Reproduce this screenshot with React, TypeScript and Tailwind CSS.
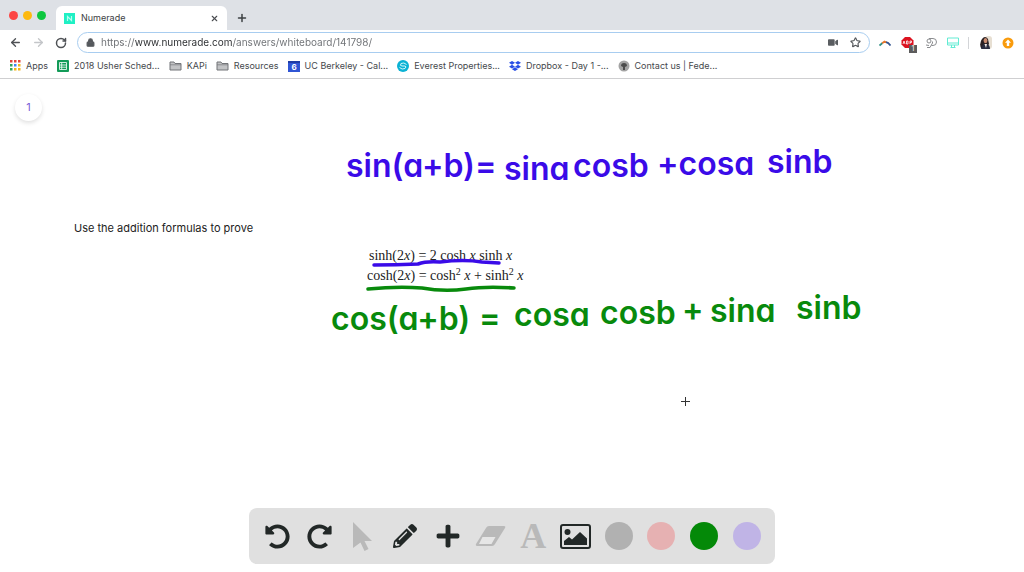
import type { ReactNode } from 'react';
import { ArrowLeft, ArrowRight, Lock, Plus, RotateCw, Star, X } from 'lucide-react';
import { FaDropbox, FaPencilAlt, FaPlus, FaUndoAlt, FaRedoAlt, FaVideo } from 'react-icons/fa';
import { clsx } from 'clsx';

// ============================================================================
// Browser chrome
// ============================================================================

function TabStrip() {
  return (
    <div className="flex h-[30px] items-end bg-[#dee1e6]">
      <div className="flex h-full w-14 shrink-0 items-center gap-[5px] pl-[9px]">
        <span className="h-[9px] w-[9px] rounded-full bg-[#fc4645]" />
        <span className="h-[9px] w-[9px] rounded-full bg-[#fdb90f]" />
        <span className="h-[9px] w-[9px] rounded-full bg-[#0dc73f]" />
      </div>
      <div className="flex h-6 w-[171px] items-center rounded-t-md bg-white pr-2 pl-2">
        <svg viewBox="0 0 11 11" className="h-[11px] w-[11px]">
          <rect width="11" height="11" fill="#1ff0c4" />
          <path d="M3.5 8V3.5L7.5 7.5V3" fill="none" stroke="#b4fff0" strokeWidth="1.2" />
        </svg>
        <span className="ml-[6px] flex-1 text-[9px] text-[#3c4043]">Numerade</span>
        <button aria-label="Close tab">
          <X className="h-[9px] w-[9px] text-[#4a4d51]" strokeWidth={3} />
        </button>
      </div>
      <button aria-label="New tab" className="flex h-6 items-center pl-[9px]">
        <Plus className="h-3 w-3 text-[#3c4043]" strokeWidth={3} />
      </button>
    </div>
  );
}

function Extensions() {
  return (
    <div className="flex items-center">
      <button aria-label="Rainbow extension">
        <svg viewBox="0 0 12 12" className="h-3 w-3" fill="none" strokeWidth="1.8">
          <path d="M.5 8.500l3-2.500" stroke="#2f8f83" />
          <path d="M3.2 6.200L5.500 4.500 7.500 5.500" stroke="#e5762c" />
          <path d="M7 5.200Q9.500 5.700 11.500 8.500" stroke="#35558f" />
        </svg>
      </button>
      <button aria-label="Ad blocker" className="relative ml-[10px]">
        <svg viewBox="0 0 14 14" className="h-[14px] w-[14px]">
          <path d="M4 1h5l3.500 3.500v4L9 12H4L.5 8.500v-4z" fill="#dc1320" />
          <path d="M2 8l1-3 1 3M5.500 5v3h1.500V5zM9 8V5h1.500v1.500H9" fill="none" stroke="#fff" strokeWidth=".8" />
        </svg>
        <span className="absolute -right-[2px] -bottom-[3px] flex h-2 w-2 items-center justify-center bg-[#5c5c5c] text-[7px] leading-none text-white">
          1
        </span>
      </button>
      <button aria-label="Chat extension" className="ml-[10px]">
        <svg viewBox="0 0 12 12" className="h-3 w-3" fill="none" stroke="#8b8d90" strokeWidth="1">
          <path d="M4 1.500h4a3.500 3.500 0 0 1 0 7H6.500" />
          <circle cx="4" cy="4" r="2" />
          <path d="M2 10.500h3L7.500 6V4.500M1 8l3 .5" />
        </svg>
      </button>
      <button aria-label="Screen extension" className="ml-[10px]">
        <svg viewBox="0 0 12 12" className="h-3 w-3" fill="none" stroke="#62ebd3" strokeWidth="1">
          <path d="M.5 1h11v7H.5zM.5 6h11M3.500 10.500h5M4.500 8v2.500M7.500 8v2.500" />
        </svg>
      </button>
      <span className="ml-[9px] h-3 w-px bg-[#d3d5d8]" />
      <button aria-label="Profile" className="ml-[10px]">
        <svg viewBox="0 0 13 13" className="h-[13px] w-[13px]">
          <rect x="6" width="7" height="13" rx="3" fill="#e7dfd2" />
          <path d="M2 12Q0 7 3 3q3-4 6 0l1 5-3 4z" fill="#2b2224" />
          <ellipse cx="6.500" cy="4.600" rx="1.900" ry="2.600" fill="#c98b6f" />
          <path d="M2 13q1-5 4-5l1 2 1-2q3 1 3 5z" fill="#2a2d3f" />
          <path d="M5.500 8h2.500L7 12z" fill="#f3ece8" />
        </svg>
      </button>
      <button aria-label="Update browser" className="ml-[10px]">
        <svg viewBox="0 0 12 12" className="h-3 w-3">
          <circle cx="6" cy="6" r="5.500" fill="#f99b0c" />
          <path d="M6 2.500l3 3.300H7.200V9H4.800V5.800H3z" fill="#fff" />
        </svg>
      </button>
    </div>
  );
}

function AddressBar() {
  return (
    <div className="flex h-[25px] items-center bg-white pr-[10px] pl-[9px]">
      <button aria-label="Back">
        <ArrowLeft className="h-[13px] w-[13px] text-[#4f5256]" strokeWidth={2.5} />
      </button>
      <button aria-label="Forward" className="ml-[10px]">
        <ArrowRight className="h-[13px] w-[13px] text-[#c4c6c9]" strokeWidth={2.5} />
      </button>
      <button aria-label="Reload" className="ml-[10px]">
        <RotateCw className="h-3 w-3 text-[#4f5256]" strokeWidth={3} />
      </button>
      <div className="ml-[10px] flex h-[21px] flex-1 items-center rounded-full border border-[#a8cdf0] bg-white pr-2 pl-2">
        <Lock className="h-[9px] w-[9px] fill-[#55585c] text-[#55585c]" strokeWidth={3} />
        <input
          aria-label="Address"
          defaultValue="https://www.numerade.com/answers/whiteboard/141798/"
          className="ml-[6px] min-w-0 flex-1 bg-[linear-gradient(90deg,#6c6f73_34px,#292b2e_34px,#292b2e_131px,#6c6f73_131px)] bg-clip-text text-[10px] text-transparent outline-none"
        />
        <button aria-label="Camera">
          <FaVideo className="h-[9px] w-[10px] text-[#5a5d61]" />
        </button>
        <button aria-label="Bookmark this page" className="ml-3">
          <Star className="h-[11px] w-[11px] text-[#55585c]" strokeWidth={2.5} />
        </button>
      </div>
      <div className="ml-[9px]">
        <Extensions />
      </div>
    </div>
  );
}

const APP_DOTS = [
  '#e2453c', '#e2453c', '#e2453c',
  '#35a35a', '#4285f4', '#f2b51c',
  '#35a35a', '#f2b51c', '#f2b51c',
];

function AppsIcon() {
  return (
    <svg viewBox="0 0 11 11" className="h-[11px] w-[11px]">
      {APP_DOTS.map((color, i) => (
        <rect key={i} x={(i % 3) * 4} y={Math.floor(i / 3) * 4} width="2.500" height="2.500" fill={color} />
      ))}
    </svg>
  );
}

function SheetIcon() {
  return (
    <svg viewBox="0 0 12 12" className="h-3 w-3">
      <rect width="12" height="12" rx="1" fill="#139b58" />
      <path d="M2.500 2.500h7v7h-7zM2.500 5h7M2.500 7.200h7M4.700 2.500v7" fill="none" stroke="#fff" strokeWidth=".8" />
    </svg>
  );
}

function FolderIcon() {
  return (
    <svg viewBox="0 0 13 12" className="h-3 w-[13px]">
      <path d="M1 10V2h4l1 1.500h6V10z" fill="#c2c3c5" stroke="#737579" />
      <path d="M1 4.800h11" stroke="#737579" strokeWidth=".7" />
    </svg>
  );
}

function CalendarIcon() {
  return (
    <svg viewBox="0 0 12 12" className="h-3 w-3">
      <rect y="1" width="12" height="11" fill="#2f55d4" />
      <rect y="1" width="12" height="2" fill="#1f3ca4" />
      <text x="6" y="10" textAnchor="middle" fontSize="8" fontWeight="700" fill="#fff">6</text>
    </svg>
  );
}

function EverestIcon() {
  return (
    <svg viewBox="0 0 12 12" className="h-3 w-3">
      <circle cx="6" cy="6" r="6" fill="#0bb2d4" />
      <path d="M9.500 4.500Q7 2 4 3.500 2.500 6 5 6h3M2.500 7.500Q5 10 8 8.500 10 6.500 8 6" fill="none" stroke="#d5f7fb" />
    </svg>
  );
}

function SealIcon() {
  return (
    <svg viewBox="0 0 12 12" className="h-3 w-3">
      <circle cx="6" cy="6" r="5.500" fill="#a3a3a3" />
      <path d="M3 6q0-3 3-3t3 3L7 7v3H5V7z" fill="#4b4b4b" />
    </svg>
  );
}

const BOOKMARKS: { label: string; icon: ReactNode }[] = [
  { label: 'Apps', icon: <AppsIcon /> },
  { label: '2018 Usher Sched...', icon: <SheetIcon /> },
  { label: 'KAPi', icon: <FolderIcon /> },
  { label: 'Resources', icon: <FolderIcon /> },
  { label: 'UC Berkeley - Cal...', icon: <CalendarIcon /> },
  { label: 'Everest Properties...', icon: <EverestIcon /> },
  { label: 'Dropbox - Day 1 -...', icon: <FaDropbox className="h-3 w-3 text-[#2a4fe6]" /> },
  { label: 'Contact us | Fede...', icon: <SealIcon /> },
];

function BookmarksBar() {
  return (
    <nav className="flex h-6 items-center gap-[9px] border-b border-[#cfcfd1] bg-white pb-[2px] pl-[10px]">
      {BOOKMARKS.map((bookmark) => (
        <a key={bookmark.label} href="#" className="flex items-center gap-[5px] text-[9px] whitespace-nowrap text-[#45484c]">
          {bookmark.icon}
          {bookmark.label}
        </a>
      ))}
    </nav>
  );
}

// ============================================================================
// Whiteboard
// ============================================================================

// Handwritten notes, placed freely on the canvas
const NOTES = [
  { text: 'sin(a+b)=', place: 'left-[346px] top-[67px] text-[#3a0be8]' },
  { text: 'sina', place: 'left-[504px] top-[70px] text-[#3a0be8]' },
  { text: 'cosb', place: 'left-[573px] top-[67px] text-[#3a0be8]' },
  { text: '+cosa', place: 'left-[657px] top-[65px] text-[#3a0be8]' },
  { text: 'sinb', place: 'left-[767px] top-[63px] text-[#3a0be8]' },
  { text: 'cos(a+b)', place: 'left-[331px] top-[220px] text-[#088a0c]' },
  { text: '=', place: 'left-[479px] top-[219px] text-[#088a0c]' },
  { text: 'cosa', place: 'left-[514px] top-[216px] text-[#088a0c]' },
  { text: 'cosb', place: 'left-[600px] top-[214px] text-[#088a0c]' },
  { text: '+', place: 'left-[682px] top-[211px] text-[#088a0c]' },
  { text: 'sina', place: 'left-[710px] top-[212px] text-[#088a0c]' },
  { text: 'sinb', place: 'left-[796px] top-[209px] text-[#088a0c]' },
];

function InkLayer() {
  return (
    <div className="pointer-events-none absolute inset-0 overflow-hidden">
      {NOTES.map((note) => (
        <span
          key={note.place}
          className={clsx(
            'absolute text-[32px] leading-10 font-semibold whitespace-nowrap [font-feature-settings:"cv11"]',
            note.place
          )}
        >
          {note.text}
        </span>
      ))}
      <svg viewBox="0 0 170 40" className="absolute top-[177px] left-[364px] h-10 w-[170px]" fill="none" strokeWidth="3.500" strokeLinecap="round">
        <path d="M10 9Q32 9 54 8Q62 5 76 6Q100 3 118 6L135 7" stroke="#3a0be8" />
        <path d="M4 33Q34 30 58 32Q80 36 102 33Q122 30 150 32" stroke="#088a0c" />
      </svg>
      <svg viewBox="0 0 9 9" className="absolute top-[318px] left-[681px] h-[9px] w-[9px]" stroke="#333">
        <path d="M4.500 0v9M0 4.500h9" />
      </svg>
    </div>
  );
}

function Problem() {
  return (
    <div className="pt-[21px] pl-[74px]">
      <p className="text-[11px] leading-4 text-[#222]">Use the addition formulas to prove</p>
      <div className="ml-[293px] pt-[10px] font-['Liberation_Serif',serif] text-[14px] leading-5 whitespace-nowrap text-[#222]">
        <p className="pl-[2px]">
          sinh(2<i>x</i>) = 2 cosh <i>x</i> sinh <i>x</i>
        </p>
        <p>
          cosh(2<i>x</i>) = cosh<sup className="text-[10px]">2</sup> <i>x</i> + sinh<sup className="text-[10px]">2</sup> <i>x</i>
        </p>
      </div>
    </div>
  );
}

function PointerIcon() {
  return (
    <svg viewBox="0 0 19 29" className="h-[29px] w-[19px]" fill="#b9b9b9">
      <path d="M0 0l19 19h-7.500l4 8-4 2-4-8.500L0 26z" />
    </svg>
  );
}

function EraserIcon() {
  return (
    <svg viewBox="0 0 32 22" className="h-[22px] w-8" fill="#b9b9b9">
      <path d="M14 1h15q2 0 1 2L20 19q-1 2-3 2H3q-3 0-2-2L11 3q1-2 3-2z" />
      <path d="M7.500 12h13l-4 7H4z" fill="#e6e6e6" />
    </svg>
  );
}

function PictureIcon() {
  return (
    <svg viewBox="0 0 31 25" className="h-[25px] w-[31px]" fill="#222827">
      <rect x="1" y="1" width="29" height="23" rx="2" fill="none" stroke="#222827" strokeWidth="2" />
      <circle cx="7.500" cy="8" r="3" />
      <path d="M4 21v-4l5-4 3 2.500L20 8l7 6.500V21z" />
    </svg>
  );
}

const TOOLS: { label: string; icon: ReactNode }[] = [
  { label: 'Undo', icon: <FaUndoAlt className="h-[25px] w-[25px]" /> },
  { label: 'Redo', icon: <FaRedoAlt className="h-[25px] w-[25px]" /> },
  { label: 'Pointer', icon: <PointerIcon /> },
  { label: 'Pencil', icon: <FaPencilAlt className="h-6 w-6" /> },
  { label: 'Add', icon: <FaPlus className="h-[26px] w-[26px]" /> },
  { label: 'Eraser', icon: <EraserIcon /> },
];

const COLORS = [
  { label: 'Gray', fill: 'bg-[#b1b1b1]' },
  { label: 'Pink', fill: 'bg-[#e6b1b2]' },
  { label: 'Green', fill: 'bg-[#048908]' },
  { label: 'Purple', fill: 'bg-[#c0b4e6]' },
];

function Toolbar() {
  return (
    <div className="grid h-14 w-[526px] grid-cols-12 items-center justify-items-center rounded-lg bg-[#e0e0e0] px-[7px] text-[#222827]">
      {TOOLS.map((tool) => (
        <button key={tool.label} aria-label={tool.label}>
          {tool.icon}
        </button>
      ))}
      <button className="font-['Liberation_Serif',serif] text-[36px] leading-none font-bold text-[#b9b9b9]">A</button>
      <button aria-label="Image">
        <PictureIcon />
      </button>
      {COLORS.map((color) => (
        <button key={color.label} aria-label={color.label} className={clsx('h-7 w-7 rounded-full', color.fill)} />
      ))}
    </div>
  );
}

export default function App() {
  return (
    <div className="flex min-h-screen flex-col bg-white font-[Inter,sans-serif]">
      <header>
        <TabStrip />
        <AddressBar />
        <BookmarksBar />
      </header>
      <main className="relative flex flex-1 flex-col pt-[15px]">
        <button className="ml-[15px] h-[27px] w-[27px] rounded-full bg-white text-[11px] text-[#7b5cd6] shadow-[0_2px_4px_rgba(0,0,0,0.12)]">
          1
        </button>
        <div className="pt-[78px]">
          <Problem />
        </div>
        <InkLayer />
        <div className="mt-auto flex justify-center pb-2">
          <Toolbar />
        </div>
      </main>
    </div>
  );
}
